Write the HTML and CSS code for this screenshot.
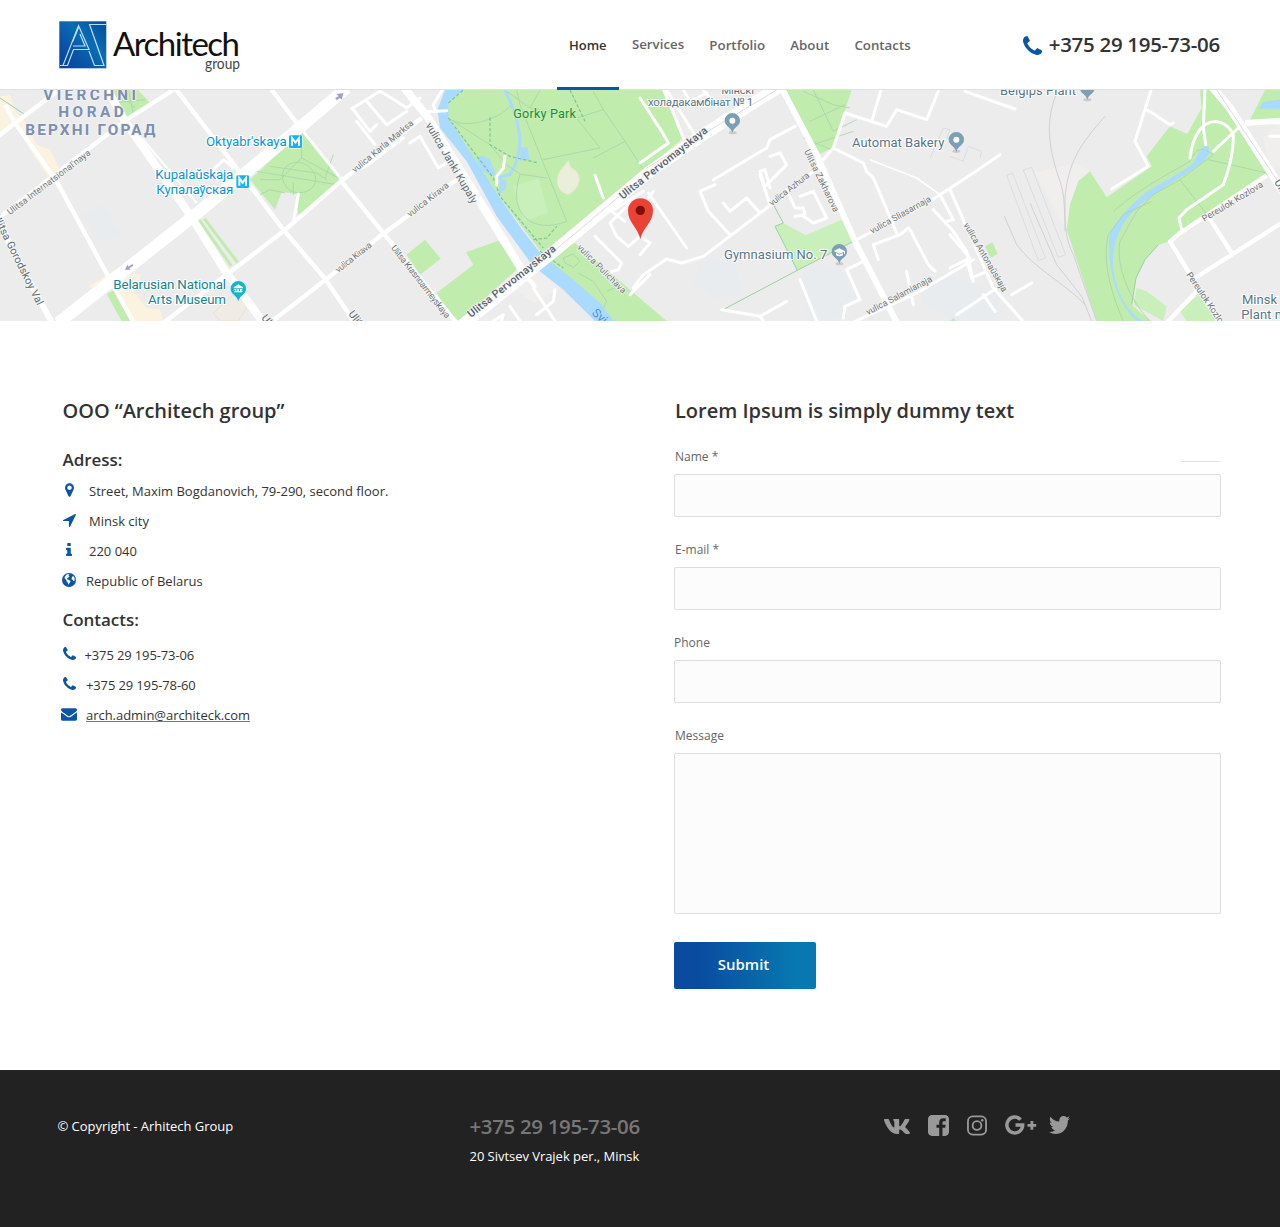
FILE: index.html
```html
<!DOCTYPE html>
<html lang="en">
<head>
<meta charset="utf-8">
<title>Architech group - Contacts</title>
<link rel="stylesheet" href="styles.css">
</head>
<body>
<svg class="defs" width="0" height="0">
  <defs>
    <symbol id="phone" viewBox="0 0 1408 1408"><path d="M1408 1112q0 27-10 70.5t-21 68.5q-21 50-122 106-94 51-186 51-27 0-53-3.5t-57-12.5-47-14.5-55.5-20.5-49.5-18q-98-35-175-83-127-79-264-216t-216-264q-48-77-83-175-3-9-18-49.5t-20.5-55.5-14.5-47-12.5-57-3.5-53q0-92 51-186 56-101 106-122 25-11 68.5-21t70.5-10q14 0 21 3 18 6 53 76 11 19 30 54t35 63.5 31 53.5q3 4 17.5 25t21.5 35.5 7 28.5q0 20-28.5 50t-62 55-62 53-28.5 46q0 9 5 22.5t8.5 20.5 14 24 11.5 19q76 137 174 235t235 174q2 1 19 11.5t24 14 20.5 8.5 22.5 5q18 0 46-28.5t53-62 55-62 50-28.5q14 0 28.5 7t35.5 21.5 25 17.5q25 15 53.5 31t63.5 35 54 30q70 35 76 53 3 7 3 21z"/></symbol>
  </defs>
</svg>

<header class="header">
  <svg class="logo" width="184" height="54" viewBox="0 0 184 54">
    <defs><linearGradient id="lg" x1="0" y1="1" x2="1" y2="0"><stop offset="0" stop-color="#0a409c"/><stop offset=".35" stop-color="#0a56a8"/><stop offset=".6" stop-color="#0a6cb4"/><stop offset="1" stop-color="#064a98"/></linearGradient></defs>
    <rect x="1.300" y="1.300" width="47" height="47" fill="url(#lg)"/>
    <path d="M2 45.500H5L20.500 5.500L31 29.500H15.500L9.500 45.500H4 M14.500 22L20.500 7.500 M15 26H27L22 14 M48 4.500H31.500L46 45.500H36.500L31 31 M31.500 4.500L42 34" fill="none" stroke="#b9def5" stroke-width="1.200"/>
    <text class="logo-name" x="55" y="35.500" textLength="127" lengthAdjust="spacing">Architech</text>
    <text class="logo-sub" x="147" y="48.500" textLength="35" lengthAdjust="spacingAndGlyphs">group</text>
  </svg>
  <nav class="nav">
    <a class="active" href="#">Home</a><a class="raised" href="#">Services</a><a href="#">Portfolio</a><a href="#">About</a><a href="#">Contacts</a>
  </nav>
  <div class="header-phone"><svg class="blue" width="19" height="19"><use href="#phone"/></svg><span>+375 29 195-73-06</span></div>
</header>

<svg class="map" viewBox="0 6 3840 693" width="1280" height="231">
  <!-- parks, blocks and water -->
  <g class="areas">
    <g class="beige">
      <path d="M0 25L30 20 50 75 75 100 110 170 150 185 180 245 150 275 100 200 45 110 0 150zM260 600L345 545 425 560 400 610 440 660 480 665 490 699H400L340 590z"/>
    </g>
    <path d="M640 675L700 620 745 650 715 699H660z" fill="#f1ebe6" stroke="#eedfd5" stroke-width="3"/>
    <path class="haze" d="M250 380L310 350 365 440 300 460zM2100 520L2200 520 2230 620 2150 630 2080 590zM2420 520L2520 540 2570 640 2500 699H2430L2400 590zM2760 600L2850 560 3000 620 2980 699H2870L2770 650z"/>
    <path class="cream" d="M3105 255L3225 225 3270 250 3230 330 3200 430zM1540 600L1610 545 1700 590 1600 645zM1350 90L1310 80 1450 370 1560 540 1600 550zM3790 150L3840 100V240H3810z"/>
    <g class="green">
      <path d="M320 10L330 6H415L450 45 375 98zM905 130L1022 275 895 383 890 318 845 312 825 365 750 275zM320 618L345 605 397 699H365z"/>
      <path d="M1340 90L1345 45 1390 6H1985L2050 150 1630 500 1500 330z"/>
      <path d="M1625 510L1725 465 2000 699H1840z"/>
      <path d="M1220 500L1275 455 1322 512 1260 560zM1310 615L1420 530 1398 493 1495 458 1555 540 1380 699H1360z"/>
      <path d="M2345 6H2555L2498 180 2445 205z"/>
      <path class="light" d="M2325 415L2350 405 2417 442 2525 395 2558 460 2392 547z"/>
      <path d="M2850 699L2860 690 2868 699zM2955 475L2977 463 2993 497 2972 510z"/>
      <path d="M3235 280L3270 250 3320 328 3455 235 3440 205 3510 115 3562 138 3605 60 3600 6H3640L3805 260 3510 460 3475 470 3435 515 3408 570 3395 650 3450 699H3290L3200 425 3210 350z"/>
      <path d="M3750 95L3795 6H3840V100z"/>
      <path class="light" d="M3410 600L3440 610 3500 655 3490 699 3400 650zM3540 670L3595 620 3650 699H3560z"/>
      <path class="light" d="M1540 295L1615 270 1645 375 1570 400z"/>
    </g>
    <g class="water">
      <path d="M1335 6H1390L1345 45V90L1500 330 1570 430 1625 500 1720 575 1800 645 1842 699H1785L1690 605 1600 535 1490 385 1400 220 1320 120 1312 65z"/>
      <path d="M1430 212L1445 202 1470 215 1488 262 1470 262 1445 245zM1562 178H1583L1588 215 1560 218zM1500 270L1520 280 1518 300 1495 325z"/>
      <path d="M3775 62L3790 42 3840 34V62z"/>
      <path d="M3605 178C3630 165 3638 190 3615 215 3590 245 3450 315 3400 370 3340 430 3325 520 3350 590 3365 640 3390 675 3428 699H3410C3360 650 3325 580 3327 450 3340 400 3400 345 3435 315 3500 275 3560 245 3580 225 3590 200z"/>
    </g>
    <path d="M1515 6C1560 100 1580 180 1530 260L1490 270" fill="none" stroke="#aadaff" stroke-width="9"/>
    <path d="M1692 235L1705 217 1712 238C1750 255 1745 300 1705 320 1665 310 1660 265 1692 235z" fill="#eaeedb" stroke="#e3e9c2" stroke-width="3"/>
  </g>
  <!-- footpaths and rail -->
  <g class="paths">
    <path d="M335 45L435 35M360 20L405 60M385 6L400 75M780 275H840L905 210 1015 270M810 235L950 255 980 275M905 210V160M855 290C820 230 910 190 945 260 960 320 870 330 855 290M880 285V320M780 320L810 305 855 315M770 250L1010 290"/>
    <path d="M1345 90C1400 130 1500 90 1530 55M1360 100L1470 170 1520 230 1560 258 1640 270M1550 6L1560 50 1700 400M1520 10L1590 60 1620 6M1590 60L1730 90 1800 180 1750 190 1630 215M1730 90L1810 65 1780 10M1810 65L1875 160 1780 210M1875 160L1940 260M1560 260C1520 380 1600 440 1700 400"/>
    <path d="M1690 510L1720 498 1740 520 1720 538 1695 525zM1735 555L1780 580 1820 640 1810 660M1820 610L1855 595M1000 200L975 270"/>
    <path d="M2440 6L2500 130 2570 95M2410 10L2500 50 2550 60M2430 100L2535 50M2410 150L2495 185M2440 170L2560 130"/>
    <path d="M3455 340L3370 380 3325 440C3305 520 3335 620 3370 699M3640 200L3540 275 3460 320 3410 370 3360 460C3345 530 3390 640 3450 699M3540 275L3625 385M3625 215L3800 255M3340 370C3420 300 3520 250 3570 220 3590 180 3600 175 3640 200"/>
    <path class="rail" d="M3170 15C3135 100 3145 180 3180 280 3205 350 3180 420 3220 500L3290 699M3315 85C3240 170 3205 220 3195 330V430M3013 385L3050 470C3100 540 3200 590 3255 650M3090 345L3170 530 3245 625 3275 699"/>
    <path class="rail faint" d="M3020 262L3038 255 3136 510 3115 518zM3070 246L3095 238 3197 500 3175 508zM2790 210L2830 120 2850 125 2840 150 2870 155 2860 190M2850 205L2890 220 2905 175 2945 190 2940 210"/>
    <path class="edge" d="M2320 350L2350 405 2325 415 2392 547 2175 662M2392 547L2560 460M3395 650L3408 570 3435 515 3475 470M0 30L75 80"/>
    <path class="dash" d="M1345 90L1480 270 1500 325 1630 480M1470 88V170L1530 205 1615 225M1710 6L1755 100M1345 45L1390 6M1600 455L1640 450 1670 415M1620 490L1690 540"/>
  </g>
  <!-- streets -->
  <g class="roads">
    <path class="w34" d="M175 705L330 582 580 385 850 160 1040 0"/>
    <path class="w34" d="M1385 712L1650 500 1950 250 2110 140 2345 -8"/>
    <path class="w22" d="M320 0L375 100 575 388 675 548 795 710M1205 -10L1285 90 1565 545M3635 -5L3690 60 3830 280 3860 330"/>
    <path class="w18" d="M-15 365L30 470 160 712M3735 105L3850 98M2345 0L2450 200 2570 470 2695 712"/>
    <path class="w14" d="M-10 395L375 98 520 6M-5 145L45 105 185 0M15 50L45 105 170 280 330 575 405 712M525 0L710 240 850 425 975 572 1070 712M490 705L690 552 850 430 1022 280 1265 90M800 712L975 577 1150 437 1370 275M815 5L890 105M1020 275L1150 435 1370 705M1560 545L1605 595"/>
    <path class="w10" d="M905 125L1025 275M895 318L880 405M640 245L672 215 700 240M1060 65L1110 130 1130 110M1055 62L1140 10 1190 40 1220 60 1260 30M1100 40L1160 110 1220 70M1070 100L1125 170M1090 240L1210 150M1230 165L1260 145 1315 240 1340 225M1270 72L1340 68"/>
    <path class="w10" d="M1305 65L1300 50 1330 0M1605 595L1600 600 1665 699M1610 680L1660 640 1665 605M1480 699L1510 680 1505 699M1530 655L1560 699M1515 205L1510 240 1490 265V290M1785 262L1810 330M1990 0L2050 150M1920 225L2005 165 1985 130 1920 30M2120 15L2070 40 2050 6M2110 6L2150 55M2000 6L2100 165"/>
    <path class="w10" d="M1945 330L1960 310M1890 345L1830 405 1850 445 1885 475 1920 445 1950 465M1785 445L1865 525 1855 545 1820 555M1875 400L1835 370 1930 310M1890 620L1950 560M1920 500L1950 465"/>
    <path class="w10" d="M1945 315L2060 480M2140 275L2300 180 2310 155 2385 115M2100 310L2145 290M2100 310L2125 370 2190 440M2170 345L2190 370 2240 330 2280 375M2290 285L2280 250 2295 245 2310 300M2310 205L2340 195 2360 230 2295 295M2280 260L2310 350M1900 600L1930 560 2000 513 2045 525 2110 505 2300 360 2440 250 2500 180 2590 225 2600 250 2620 270 2690 435M2360 305L2385 360 2410 360 2415 380 2385 385M2400 325L2440 310 2480 390 2440 405 2410 385"/>
    <path class="w10" d="M2500 180L2535 75 2660 115 2690 65 2780 95 2815 10M2615 100L2645 0M2560 460L2790 340 2920 255 3000 200M2850 305L2980 600 3080 712M2820 320L2860 395 2840 400M2800 365L2860 430 2900 490 2920 580M2540 712L2760 610 2920 515M2635 515L2620 470 2700 440 2725 420M2730 425L2785 530 2805 550M2720 550L2740 650M2400 575L2450 699M2590 520L2540 545 2580 635 2535 655 2530 690M2165 665L2280 685 2360 640M2280 685L2290 699"/>
    <path class="w10" d="M2895 10L3045 63M3455 0L3405 160 3445 235 3335 303M3440 65L3465 80 3510 110 3520 105M2850 540L2900 515 2915 570 2960 550M2850 440L2910 510M2870 680L2990 600M2950 620L2985 670M3035 620L3095 585M3615 0L3610 120 3617 170M3570 210C3590 50 3700 100 3700 150 3700 200 3685 250 3670 290L3560 365 3537 390 3545 425M3640 190L3715 120"/>
    <path class="w14" d="M3800 262L3540 435 3510 460 3655 699M3585 570L3845 405M3625 385L3695 495M3500 705L3590 610"/>
    <path class="w10" d="M3810 145H3840"/>
    <path class="thin-road" d="M2610 215L2750 270 2820 320"/>
    <path class="centre" d="M1655 495L1950 248M3650 6L3830 275M1940 240L2330 6"/>
    <path d="M425 150L590 345" stroke-width="6"/>
    <path class="verge" d="M598 396L694 534M613 392L713 524"/>
  </g>
  <!-- street names -->
  <g class="street">
    <text transform="translate(30 382) rotate(-37)" textLength="305">Ulitsa Internatsional'naya</text>
    <text class="major" transform="translate(-22 385) rotate(63.500)" textLength="300">Ulitsa Gorodskoy Val</text>
    <text transform="translate(1065 255) rotate(-39.500)" textLength="230">vulica Karla Marksa</text>
    <text class="major" transform="translate(1276 112) rotate(59.500)" textLength="275">vulica Janki Kupaly</text>
    <text transform="translate(1230 388) rotate(-38)" textLength="150">vulica Kirava</text>
    <text transform="translate(1015 555) rotate(-38)" textLength="130">vulica Kirava</text>
    <text transform="translate(1172 480) rotate(52)" textLength="270">Ulitsa Krasnoarmeyskaya</text>
    <text class="bold" transform="translate(1413 690) rotate(-38.500)" textLength="328">Ulitsa Pervomayskaya</text>
    <text class="bold" transform="translate(1868 335) rotate(-38.500)" textLength="328">Ulitsa Pervomayskaya</text>
    <text transform="translate(1730 480) rotate(45)" textLength="195">vulica Pulichava</text>
    <text transform="translate(2316 355) rotate(-38)" textLength="145">vulica Azhura</text>
    <text transform="translate(2412 190) rotate(64)" textLength="205">Ulitsa Zakharova</text>
    <text transform="translate(2616 438) rotate(-29)" textLength="205">vulica Sliasarnaja</text>
    <text transform="translate(2604 682) rotate(-28)" textLength="220">vulica Salamianaja</text>
    <text transform="translate(2890 410) rotate(60)" textLength="235">vulica Antonaŭskaja</text>
    <text transform="translate(3613 402) rotate(-31)" textLength="208">Pereulok Kozlova</text>
    <text transform="translate(3558 560) rotate(56)" textLength="205">Pereulok Kozlova</text>
    <text class="major" transform="translate(3822 282) rotate(59)">Ulitsa</text>
    <text class="major" transform="translate(1044 678) rotate(52)">Ulitsa</text>
    <text class="major" transform="translate(783 690) rotate(52)">Ulitsa</text>
    <text class="river" transform="translate(1774 677) rotate(43)">Svislač</text>
    <path d="M375 545l8-15 2 6 13-8 2 5-13 8 5 4zM1030 16L1010 18 1016 25 1006 30 1010 36 1020 30 1025 34z" fill="#9aa0c9"/>
  </g>
  <!-- places -->
  <g class="place">
    <g class="district">
      <text x="130" y="35" textLength="278">VIERCHNI</text>
      <text x="175" y="87" textLength="196">HORAD</text>
      <text x="76" y="142" textLength="390">ВЕРХНІ ГОРАД</text>
    </g>
    <g class="metro">
      <text x="618" y="173" textLength="242">Oktyabr'skaya</text>
      <text x="466" y="272" textLength="234">Kupalaŭskaja</text>
      <text x="469" y="317" textLength="231">Купалаўская</text>
      <g class="m"><rect x="867" y="142" width="39" height="38" rx="4"/><rect x="709" y="262" width="38" height="38" rx="4"/><path d="M876 173V150L886.500 164 897 150V173M718 293V270L728 284 738 270V293"/></g>
    </g>
    <g class="museum"><text x="340" y="602" textLength="338">Belarusian National</text><text x="444" y="647" textLength="234">Arts Museum</text></g>
    <text class="park" x="580" y="89" textLength="188" transform="translate(960)">Gorky Park</text>
    <g class="poi">
      <text class="small" x="2164" y="18" textLength="98">Мінскі</text>
      <text class="small" x="1944" y="55" textLength="316">холадакамбінат № 1</text>
      <text x="2556" y="176" textLength="277">Automat Bakery</text>
      <text x="2172" y="512" textLength="310">Gymnasium No. 7</text>
      <text x="3000" y="20" textLength="228">Belgips Plant</text>
      <text x="3726" y="647" textLength="105">Minsk</text>
      <text x="3724" y="692" textLength="265">Plant named af</text>
    </g>
  </g>
  <g class="pins">
    <ellipse class="shade" cx="2198" cy="134" rx="12" ry="5"/><ellipse class="shade" cx="2869" cy="190" rx="12" ry="5"/><ellipse class="shade" cx="2518" cy="527" rx="12" ry="5"/><ellipse class="shade" cx="3262" cy="35" rx="12" ry="5"/>
    <path d="M2197 135C2194 117 2174 115 2174 98a23 23 0 0 1 46 0C2220 115 2200 117 2197 135zM2869 192C2866 174 2846 172 2846 155a23 23 0 0 1 46 0C2892 172 2872 174 2869 192zM2518 528C2515 510 2495 508 2495 491a23 23 0 0 1 46 0C2541 508 2521 510 2518 528zM3262 36C3259 18 3239 16 3239 -1a23 23 0 0 1 46 0C3285 16 3265 18 3262 36z"/>
    <path d="M715 640C712 622 692 620 692 602a23 23 0 0 1 46 0C738 620 718 622 715 640z" fill="#12b5cb"/>
    <g fill="#fff"><circle cx="2197" cy="98" r="9"/><circle cx="2869" cy="155" r="9"/><path d="M2501 489L2518 481 2535 489V498H2532V491L2518 497zM2508 495L2518 500 2529 495V502Q2518 508 2508 502zM701 598L715 589 729 598V601H701zM703 603H727V607H724V609H727V613H703V609H706V607H703z"/><path d="M709 603H712V609H709zM717 603H720V609H717z" fill="#12b5cb"/></g>
    <path d="M1921 454C1915 420 1884 404 1884 368a37.500 37.500 0 0 1 75 0C1959 404 1927 420 1921 454z" fill="#ea4335"/>
    <circle cx="1921" cy="367" r="14" fill="#7c1008"/>
  </g>
</svg>

<main class="main">
  <section class="info">
    <h1>OOO “Architech group”</h1>
    <h2 class="address-title">Adress:</h2>
    <ul>
      <li><svg class="icon-marker" viewBox="384 128 1024 1536" width="9" height="14"><path d="M1152 640q0-106-75-181t-181-75-181 75-75 181 75 181 181 75 181-75 75-181zm256 0q0 109-33 179l-364 774q-16 33-47.500 52t-67.500 19-67.500-19-46.500-52l-365-774q-33-70-33-179 0-212 150-362t362-150 362 150 150 362z"/></svg><span class="wide">Street, Maxim Bogdanovich, 79-290, second floor.</span></li>
      <li><svg class="icon-arrow" viewBox="190 256 1410 1410" width="13" height="13"><path d="M1593 349l-640 1280q-17 35-57 35-5 0-15-2-22-5-35.500-22.500t-13.500-39.500v-576h-576q-22 0-39.500-13.500t-22.500-35.500 4-42 29-30l1280-640q13-7 29-7 27 0 45 19 15 14 18.500 34.500t-6.500 39.500z"/></svg><span class="wide">Minsk city</span></li>
      <li><svg class="icon-info" viewBox="576 128 640 1408" width="6" height="13"><path d="M1216 1344v128q0 26-19 45t-45 19h-512q-26 0-45-19t-19-45v-128q0-26 19-45t45-19h64v-384h-64q-26 0-45-19t-19-45v-128q0-26 19-45t45-19h384q26 0 45 19t19 45v576h64q26 0 45 19t19 45zm-128-1152v192q0 26-19 45t-45 19h-256q-26 0-45-19t-19-45v-192q0-26 19-45t45-19h256q26 0 45 19t19 45z"/></svg><span class="wide">220 040</span></li>
      <li><svg class="icon-globe" viewBox="0 0 14 14" width="14" height="14"><circle cx="7" cy="7" r="7"/><path d="M5 1.200L7.500 1.300 6.500 2.700 7.500 3.500 6 4.800 5 5.400 5.500 6.400 7.200 7 8.600 8.200 7.600 10 6.400 11.800 5.900 9.800 4.600 8.500 4.200 6.800 2.800 5.500 2.600 4 3.500 2.700zM10 4.200L10.800 3 12 3.800 12.600 5.500 12.600 7.600 11.600 8.300 10.700 6.800 9.500 6z" fill="#fff"/></svg><span>Republic of Belarus</span></li>
    </ul>
    <h2 class="contacts-title">Contacts:</h2>
    <ul>
      <li><svg class="icon-phone" width="13" height="13"><use href="#phone"/></svg><span class="tel near">+375 29 195-73-06</span></li>
      <li><svg class="icon-phone" width="13" height="13"><use href="#phone"/></svg><span class="tel">+375 29 195-78-60</span></li>
      <li><svg class="icon-mail" viewBox="0 256 1792 1408" width="16" height="13"><path d="M1792 710v794q0 66-47 113t-113 47h-1472q-66 0-113-47t-47-113v-794q44 49 101 87 362 246 497 345 57 42 92.500 65.500t94.500 48 110 24.500h2q51 0 110-24.500t94.500-48 92.500-65.500q170-123 498-345 57-39 100-87zm0-294q0 79-49 151t-122 123q-376 261-468 325-10 7-42.500 31t-54 38.500-52 32.500-57.500 27-50 9h-2q-23 0-50-9t-57.500-27-52-32.500-54-38.500-42.500-31q-91-64-262-182.500t-205-142.500q-62-42-117-115.500t-55-136.500q0-78 41.500-130t118.500-52h1472q65 0 112.500 47t47.500 113z"/></svg><a href="#">arch.admin@architeck.com</a></li>
    </ul>
  </section>
  <form class="form">
    <h1>Lorem Ipsum is simply dummy text</h1>
    <div class="label-row"><label for="name">Name *</label><i class="rule"></i></div>
    <input id="name" type="text">
    <div class="label-row"><label for="email">E-mail *</label></div>
    <input id="email" type="text">
    <div class="label-row shifted"><label for="tel">Phone</label></div>
    <input id="tel" type="text">
    <div class="label-row"><label for="msg">Message</label></div>
    <textarea id="msg"></textarea>
    <button type="button">Submit</button>
  </form>
</main>

<footer class="footer">
  <p class="copyright">© Copyright - Arhitech Group</p>
  <div class="footer-contact">
    <p class="footer-phone">+375 29 195-73-06</p>
    <p>20 Sivtsev Vrajek per., Minsk</p>
  </div>
  <div class="social">
    <svg width="26" height="15" viewBox="18 96 540 320" preserveAspectRatio="none"><path d="M545 117.700c3.700-12.500 0-21.700-17.800-21.700h-58.900c-15 0-21.900 7.900-25.600 16.700 0 0-30 73.100-72.400 120.500-13.700 13.700-20 18.100-27.500 18.100-3.700 0-9.400-4.400-9.400-16.900V117.700c0-15-4.200-21.700-16.600-21.700h-92.600c-9.400 0-15 7-15 13.500 0 14.200 21.200 17.500 23.400 57.500v86.800c0 19-3.400 22.500-10.900 22.500-20 0-68.600-73.400-97.400-157.400-5.800-16.300-11.500-22.900-26.600-22.900H38.800c-16.800 0-20.200 7.900-20.200 16.700 0 15.600 20 93.100 93.100 195.500C160.400 378.100 229 416 291.400 416c37.500 0 42.100-8.400 42.100-22.900 0-66.800-3.400-73.100 15.400-73.100 8.700 0 23.700 4.400 58.700 38.100 40 40 46.600 57.900 69 57.900h58.900c16.800 0 25.300-8.400 20.400-25-11.200-34.900-86.900-106.700-90.300-111.500-8.700-11.200-6.200-16.200 0-26.200.1-.1 72-101.300 79.400-135.600z"/></svg>
    <svg width="21" height="21" viewBox="128 128 1536 1536"><path d="M1376 128q119 0 203.500 84.500t84.500 203.500v960q0 119-84.500 203.500t-203.500 84.500h-188v-595h199l30-232h-229v-148q0-56 23.500-84t91.500-28l122-1v-207q-63-9-178-9-136 0-217.500 80t-81.500 226v171h-200v232h200v595h-532q-119 0-203.500-84.500t-84.500-203.500v-960q0-119 84.500-203.500t203.500-84.500h960z"/></svg>
    <svg width="20" height="21" viewBox="0 0 21 21"><g fill="none" stroke="#999" stroke-width="1.900"><rect x="1" y="1" width="19" height="19" rx="5"/><circle cx="10.500" cy="10.500" r="4.600"/></g><circle cx="16" cy="5" r="1.300"/></svg>
    <svg width="32" height="20" viewBox="0 0 32 20"><path d="M15.600 4.600A7.900 7.900 0 1 0 17.700 10H10.500" fill="none" stroke="#999" stroke-width="3.500"/><path d="M25.500 6H28.300V9H31.200V11.800H28.300V14.800H25.500V11.800H22.500V9H25.500z"/></svg>
    <svg width="21" height="18" viewBox="108 256 1576 1280" preserveAspectRatio="none"><path d="M1684 408q-67 98-162 167 1 14 1 42 0 130-38 259.500t-115.500 248.500-184.500 210.500-258 146-323 54.500q-271 0-496-145 35 4 78 4 225 0 401-138-105-2-188-64.500t-114-159.500q33 5 61 5 43 0 85-11-112-23-185.500-111.500t-73.500-205.500v-4q68 38 146 41-66-44-105-115t-39-154q0-88 44-163 121 149 294.500 238.500t371.500 99.500q-8-38-8-74 0-134 94.500-228.500t228.500-94.500q140 0 236 102 109-21 205-78-37 115-142 178 93-10 186-50z"/></svg>
  </div>
</footer>
</body>
</html>
```
FILE: styles.css
```css
* { box-sizing: border-box; margin: 0; padding: 0; }
body { width: 1280px; background: #fff; color: #333; font: 13px/30px "Open Sans", sans-serif; }
a { color: inherit; text-decoration: none; }
ul { list-style: none; }
svg { flex: none; }
.defs { display: block; height: 0; }

.header { display: flex; height: 90px; padding-left: 58px; border-bottom: 1px solid #e0e0e0; }
.logo { margin-top: 20px; overflow: visible; }
.logo-name { font: 400 33px Lato, sans-serif; fill: #111; }
.logo-sub { font: 400 14.500px Lato, sans-serif; fill: #444; }
.nav { display: flex; margin-left: 315px; height: 90px; font-size: 13.300px; font-weight: 600; color: #666; }
.nav a { padding: 0 12.600px; height: 90px; line-height: 90px; white-space: nowrap; }
.nav .active { color: #333; padding: 0 12px; margin-right: 0.700px; border-bottom: 3px solid #0a56a5; font-size: 13px; }
.nav .raised { line-height: 88px; }
.header-phone { display: flex; align-items: center; gap: 7px; margin-left: 99.500px; height: 90px; font-size: 20.500px; letter-spacing: -0.300px; font-weight: 600; white-space: nowrap; }
.header-phone span { margin-top: -2px; }
.blue, .info svg { fill: #0a56a5; }
.blue { margin-top: 1px; }

.map { display: block; background: #ececec; font-family: Roboto, sans-serif; overflow: hidden; }
.green { fill: #c0ecae; }
.green .light { fill: #c9f0bb; }
.beige { fill: #fbf2df; }
.haze { fill: #e8ecef; }
.cream { fill: #f1efed; }
.water { fill: #aadaff; }
.paths { fill: none; stroke: #a8d4ab; stroke-width: 2.500; }
.paths .rail { stroke: #cfd1d4; stroke-width: 3; }
.paths .faint { stroke: #dcdddf; }
.paths .edge { stroke: #9bd0a2; stroke-width: 3; }
.paths .dash { stroke: #7dc492; stroke-width: 3.500; stroke-dasharray: 10 6; }
.roads { fill: none; stroke: #fff; stroke-linejoin: round; }
.w34 { stroke-width: 36; }
.w22 { stroke-width: 24; }
.w18 { stroke-width: 18; }
.w14 { stroke-width: 13; }
.w10 { stroke-width: 9; stroke-linecap: round; }
.thin-road { stroke-width: 5; }
.roads .centre { stroke: #dcdcdc; stroke-width: 3; }
.roads .verge { stroke: #c0ecae; stroke-width: 9; }
.street { font-size: 27px; fill: #70757a; stroke: #f5f5f5; stroke-width: 5px; paint-order: stroke; }
.street .major { font-size: 32px; fill: #5f6a72; }
.street .bold { font-size: 32px; font-weight: 500; fill: #55606a; }
.street .river { font-size: 36px; fill: #4a90d9; stroke: none; }
.place { font-size: 40px; stroke: #fff; stroke-width: 6px; paint-order: stroke; }
.district { font-size: 46px; font-weight: 700; fill: #7b8fae; stroke: #f1f2f4; }
.metro { fill: #0a94d6; }
.metro .m rect { fill: #14b4fa; stroke: #fff; stroke-width: 3; }
.metro .m path { fill: none; stroke: #fff; stroke-width: 6; }
.museum { fill: #12858e; }
.park { fill: #1e8a38; font-size: 38px; stroke: #c9efba; }
.poi { fill: #577584; font-size: 39px; }
.poi .small { font-size: 35px; }
.pins { fill: #7b9fb4; }
.pins .shade { fill: #c8cccf; }

.main { display: flex; height: 749px; padding: 75px 59px 0 62px; justify-content: space-between; }
h1 { font-size: 20px; line-height: 30px; font-weight: 600; white-space: nowrap; }
h2 { font-size: 17px; line-height: 30px; font-weight: 600; }
.info h1, .info h2 { padding-left: 0.500px; letter-spacing: -0.040px; }
.address-title { margin-top: 19px; }
.contacts-title { margin-top: 9px; margin-bottom: 5px; }
.address-title + ul { margin-top: 1px; }
.info li { display: flex; height: 30px; align-items: center; position: relative; }
.info li svg { margin-top: -2px; }
.info li .icon-marker { margin-left: 3px; }
.info li .icon-arrow, .info li .icon-phone { margin-left: 1px; }
.info li .icon-phone { margin-top: -3px; }
.info li .icon-info { margin-left: 4px; margin-top: -3px; }
.info li .icon-mail { margin-left: -1px; }
.info li span, .info li a { position: absolute; left: 24px; white-space: nowrap; }
.info li .wide { left: 27px; }
.info li .near { left: 22.500px; }
.info li .tel { letter-spacing: -0.130px; }
.info li a { text-decoration: underline; text-decoration-color: #777; text-underline-offset: 1px; letter-spacing: -0.030px; }

.form { display: flex; flex-direction: column; width: 547px; }
.form h1 { padding-left: 1px; margin-bottom: 19px; }
.label-row { display: flex; justify-content: space-between; height: 29px; line-height: 24px; padding-left: 1px; font-size: 12px; color: #666; }
.label-row.shifted { padding-left: 0; }
.rule { width: 40px; height: 1px; background: #e4e4e4; margin-top: 16px; }
input, textarea { display: block; width: 547px; height: 43px; margin-bottom: 21px; border: 1px solid #ddd; border-radius: 2px; background: #fcfcfc; resize: none; }
textarea { height: 161px; margin-bottom: 28px; }
button { width: 142px; height: 47px; padding: 0 3px 3px 0; border: 0; border-radius: 2px; background: linear-gradient(90deg, #0a4a9f 15%, #0778b1 85%); color: #fff; font: 600 15px "Open Sans", sans-serif; }

.footer { display: flex; height: 157px; background: #222; color: #fff; padding: 41px 0 0 57.500px; }
.footer p { letter-spacing: -0.040px; }
.copyright { width: 412px; }
.footer-contact { width: 414.500px; }
.footer .footer-phone { font-size: 20.500px; letter-spacing: -0.350px; font-weight: 600; color: #777; }
.social { display: flex; align-items: center; height: 28px; fill: #999; }
.social svg + svg { margin-left: 18px; }
.social svg:nth-child(5) { margin-left: 12px; }
.social svg:first-child { margin-top: 3px; }
```
